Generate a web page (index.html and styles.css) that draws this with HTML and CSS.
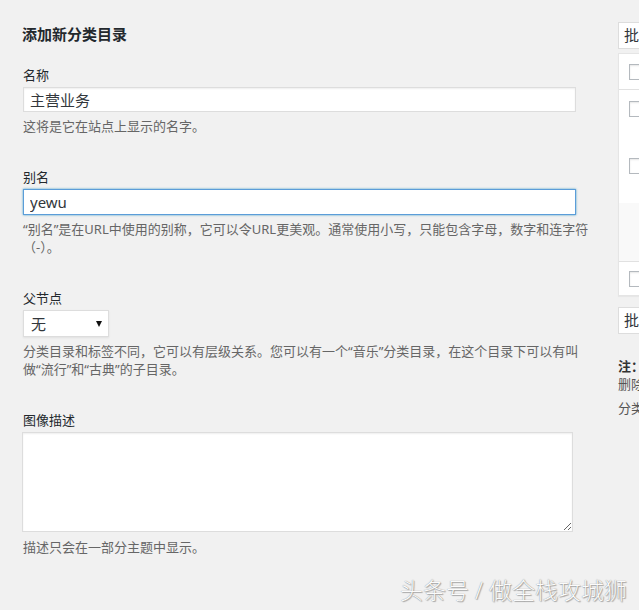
FILE: index.html
```html
<!DOCTYPE html>
<html lang="zh-CN">
<head>
    <meta charset="UTF-8">
    <meta name="viewport" content="width=device-width, initial-scale=1.0">
    <title>分类目录</title>
    <link rel="stylesheet" href="styles.css">
</head>
<body>
    <div class="wrap">
        <!-- 左侧：添加新分类目录 -->
        <div class="col-left">
            <h2 class="title">添加新分类目录</h2>
            <div class="form-field">
                <label for="tag-name">名称</label>
                <input type="text" id="tag-name" value="主营业务">
                <p class="description">这将是它在站点上显示的名字。</p>
            </div>
            <div class="form-field">
                <label for="tag-slug">别名</label>
                <input type="text" id="tag-slug" class="focused" value="yewu">
                <p class="description">“别名”是在URL中使用的别称，它可以令URL更美观。通常使用小写，只能包含字母，数字和连字符（-）。</p>
            </div>
            <div class="form-field">
                <label>父节点</label>
                <div class="select-box">
                    <span>无</span>
                    <span class="arrow"></span>
                </div>
                <p class="description">分类目录和标签不同，它可以有层级关系。您可以有一个“音乐”分类目录，在这个目录下可以有叫做“流行”和“古典”的子目录。</p>
            </div>
            <div class="form-field">
                <label for="tag-description">图像描述</label>
                <textarea id="tag-description"></textarea>
                <p class="description desc-last">描述只会在一部分主题中显示。</p>
            </div>
        </div>

        <!-- 右侧：分类目录列表 -->
        <div class="col-right">
            <div class="tablenav">
                <div class="bulk-select">批量操作</div>
            </div>
            <table class="list-table">
                <thead>
                    <tr>
                        <th class="check-column"><span class="checkbox"></span></th>
                        <th class="name-column">名称</th>
                    </tr>
                </thead>
                <tbody>
                    <tr class="row-a">
                        <td class="check-column"><span class="checkbox"></span></td>
                        <td class="name-column">新闻动态</td>
                    </tr>
                    <tr class="row-b">
                        <td class="check-column"><span class="checkbox"></span></td>
                        <td class="name-column">产品中心</td>
                    </tr>
                    <tr class="row-c alternate">
                        <td class="check-column"></td>
                        <td class="name-column">未分类</td>
                    </tr>
                </tbody>
                <tfoot>
                    <tr>
                        <th class="check-column"><span class="checkbox"></span></th>
                        <th class="name-column">名称</th>
                    </tr>
                </tfoot>
            </table>
            <div class="tablenav bottom">
                <div class="bulk-select">批量操作</div>
            </div>
            <div class="note">
                <p><strong>注：</strong><br>删除一个分类目录不会删除分类目录中的文章。</p>
                <p>分类目录可以使用分类目录到标签转换器有选择地转换成标签。</p>
            </div>
        </div>
    </div>
    <div class="watermark">头条号 / 做全栈攻城狮</div>
</body>
</html>
```

FILE: styles.css
```css
html, body {
    margin: 0;
    height: 100%;
    overflow: hidden;
}
body {
    background-color: #f1f1f1;
    font-family: "Noto Sans", "Noto Sans CJK SC", sans-serif;
    font-size: 13px;
    color: #444;
    position: relative;
}
.wrap {
    display: flex;
    padding: 22px 0 0 22px;
}
.col-left {
    width: 567px;
    flex: none;
}
.col-right {
    width: 700px;
    flex: none;
    margin-left: 29px;
}
.title {
    margin: 2px 0 22px;
    font-size: 15px;
    line-height: 20px;
    font-weight: bold;
    color: #23282d;
}
.form-field {
    margin-bottom: 33px;
}
.form-field label {
    display: block;
    line-height: 18px;
    margin: 0 0 3px 1px;
    color: #23282d;
}
.form-field input {
    display: block;
    width: 553px;
    height: 25px;
    margin: 0 0 0 1px;
    padding: 0 6px;
    box-sizing: border-box;
    border: 1px solid #ddd;
    box-shadow: inset 0 1px 2px rgba(0,0,0,0.07);
    background-color: #fff;
    font-family: "Noto Sans", "Noto Sans CJK SC", sans-serif;
    font-size: 15px;
    color: #32373c;
    outline: none;
}
.form-field input.focused {
    height: 26px;
    border-color: #5b9dd9;
    box-shadow: 0 0 2px rgba(30,140,190,0.8);
}
.description {
    margin: 5px 0 0 1px;
    line-height: 18px;
    color: #666;
}
.select-box {
    display: flex;
    align-items: center;
    justify-content: space-between;
    width: 86px;
    height: 27px;
    margin: 1px 0 0 1px;
    padding: 0 6px 0 7px;
    box-sizing: border-box;
    border: 1px solid #ddd;
    background-color: #fff;
    box-shadow: 0 1px 2px rgba(0,0,0,0.07);
    font-size: 15px;
    color: #32373c;
}
.select-box .arrow {
    width: 0;
    height: 0;
    border-left: 3px solid transparent;
    border-right: 3px solid transparent;
    border-top: 6px solid #111;
}
.form-field textarea {
    display: block;
    width: 551px;
    height: 100px;
    margin: 3px 0 0;
    box-sizing: border-box;
    border: 1px solid #ddd;
    box-shadow: inset 0 1px 2px rgba(0,0,0,0.07);
    background-color: #fff;
}
.desc-last {
    margin-top: 6px;
}
.tablenav {
    height: 31px;
}
.tablenav.bottom {
    height: auto;
    margin-top: 11px;
}
.bulk-select {
    height: 27px;
    width: 130px;
    box-sizing: border-box;
    border: 1px solid #ddd;
    background-color: #fff;
    padding-left: 5px;
    font-size: 15px;
    line-height: 25px;
    color: #32373c;
}
.list-table {
    width: 660px;
    border: 1px solid #e5e5e5;
    border-spacing: 0;
    background-color: #fff;
    box-shadow: 0 1px 1px rgba(0,0,0,0.04);
}
.list-table th, .list-table td {
    padding: 0 0 0 10px;
    text-align: left;
    font-weight: normal;
}
.list-table thead th {
    height: 35px;
    border-bottom: 1px solid #e1e1e1;
}
.list-table tfoot th {
    height: 33px;
    border-top: 1px solid #e1e1e1;
}
.list-table td {
    vertical-align: top;
    padding-top: 11px;
    box-sizing: border-box;
}
.row-a td { height: 57px; }
.row-b td { height: 56px; }
.row-c td { height: 58px; }
.list-table .alternate td {
    background-color: #f9f9f9;
}
.check-column {
    width: 26px;
}
.name-column {
    color: #0073aa;
}
.checkbox {
    display: block;
    width: 16px;
    height: 16px;
    box-sizing: border-box;
    border: 1px solid #b4b9be;
    background-color: #fff;
    box-shadow: inset 0 1px 2px rgba(0,0,0,0.1);
}
.note {
    margin-top: 23px;
    color: #555;
}
.note p {
    margin: 0 0 6px;
    line-height: 18px;
}
.note strong {
    color: #333;
}
.watermark {
    position: absolute;
    right: 12px;
    bottom: 6px;
    font-size: 23px;
    line-height: 28px;
    font-weight: 300;
    color: #fbfbfb;
    text-shadow: 0 0 1px #777, 1px 1px 1px #aaa;
    white-space: nowrap;
}
```
